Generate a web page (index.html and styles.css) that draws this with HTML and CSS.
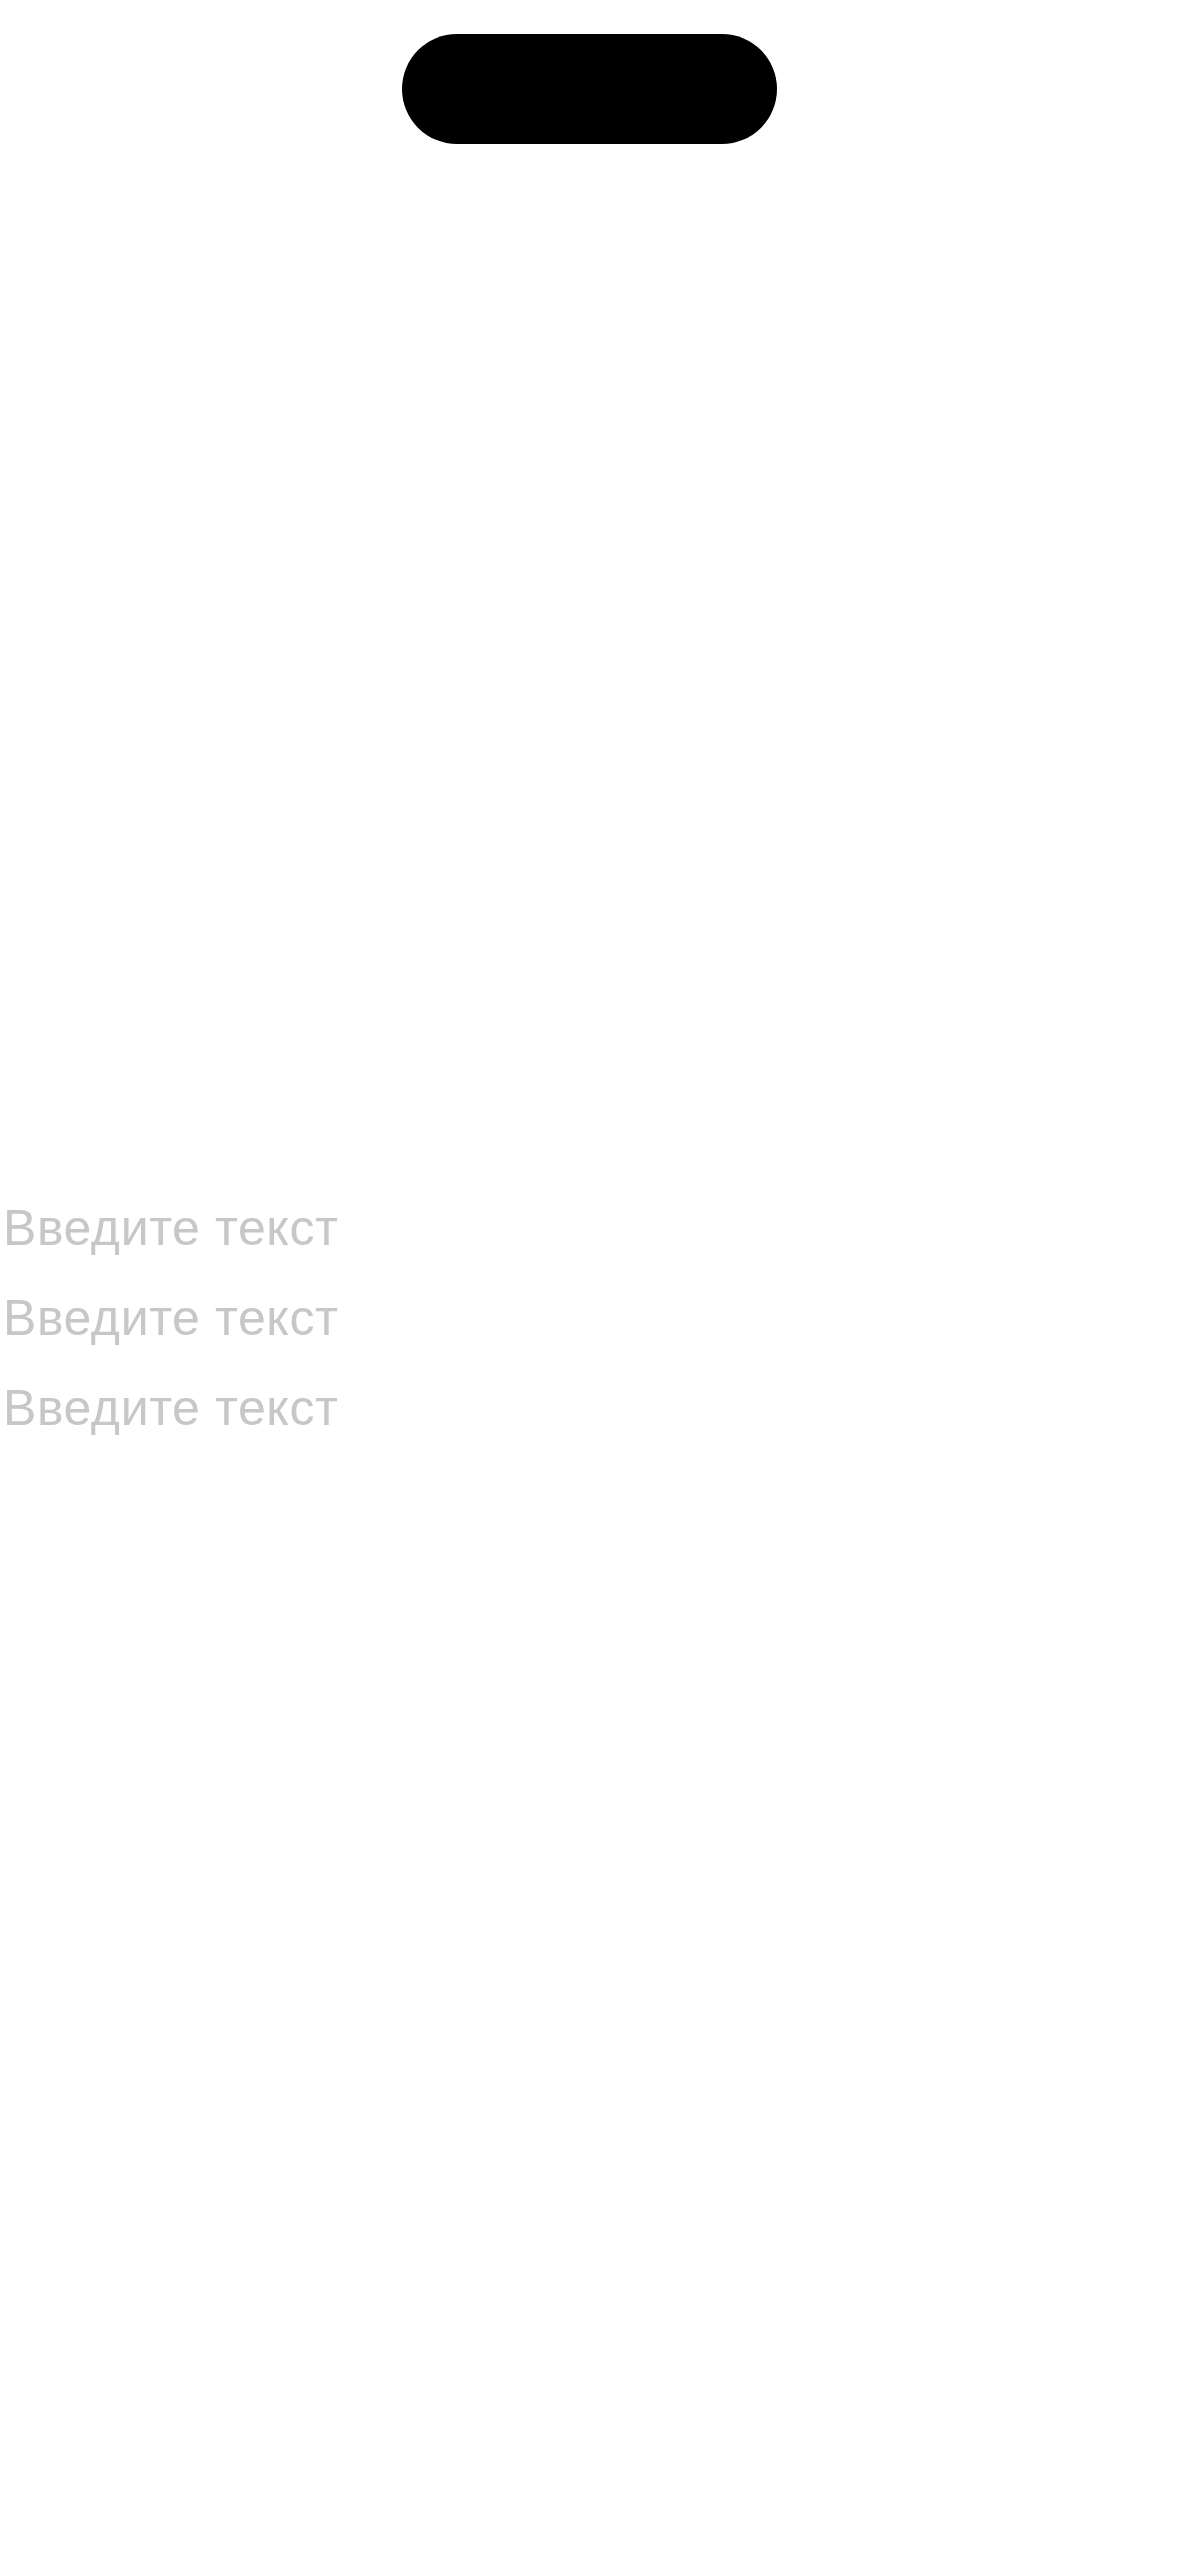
FILE: index.html
```html
<!DOCTYPE html>
<html lang="ru">
<head>
<meta charset="utf-8">
<title>Ввод текста</title>
<link rel="stylesheet" href="styles.css">
</head>
<body>
<div class="screen">
  <div class="island"></div>
  <div class="fields">
    <div class="field">Введите текст</div>
    <div class="field">Введите текст</div>
    <div class="field">Введите текст</div>
  </div>
</div>
</body>
</html>
```

FILE: styles.css
```css
html, body {
  margin: 0;
  padding: 0;
  background: #ffffff;
}
.screen {
  width: 1179px;
  height: 2556px;
  display: flex;
  flex-direction: column;
  align-items: center;
  background: #ffffff;
}
.island {
  width: 375px;
  height: 110px;
  margin-top: 34px;
  background: #000000;
  border-radius: 55px;
  flex: none;
}
.fields {
  align-self: stretch;
  margin-top: 1039px;
  padding-left: 3px;
  display: flex;
  flex-direction: column;
}
.field {
  font-family: "Liberation Sans", Arial, sans-serif;
  font-size: 50px;
  line-height: 90px;
  letter-spacing: 0.6px;
  color: #c7c7c9;
}
```
